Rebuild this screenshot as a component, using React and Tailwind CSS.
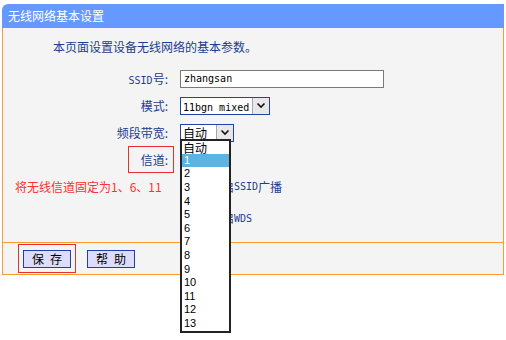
import React from 'react';

const Chevron = () => (
  <svg width="10" height="7" viewBox="0 0 10 7">
    <polyline points="1.5,1.5 5,5 8.5,1.5" fill="none" stroke="#111" strokeWidth="1.6" />
  </svg>
);

const Select = ({ width, children, menu }) => (
  <div className={`relative flex h-[18px] border border-[#2142a8] bg-white ${width}`}>
    <span className="flex-1 pl-[2px] leading-[16px] text-black whitespace-nowrap overflow-hidden">{children}</span>
    <span className="flex w-[17px] items-center justify-center border-l border-[#a6a6a6] bg-[#e8e8e8]">
      <Chevron />
    </span>
    {menu}
  </div>
);

const Row = ({ label, h = 'h-[27px]', children }) => (
  <div className={`flex items-center ${h}`}>
    <div className="w-[165px] flex justify-end text-[#1c3d91] whitespace-nowrap">{label}</div>
    <div className="ml-[12px] flex items-center">{children}</div>
  </div>
);

const mono = "font-['DejaVu_Sans_Mono',monospace] text-[10px]";

const App = () => {
  const channels = ['1', '2', '3', '4', '5', '6', '7', '8', '9', '10', '11', '12', '13'];

  const menu = (
    <div className="absolute left-[-1px] top-[14px] z-10 w-[51px] border-2 border-[#222] bg-white">
      <div className="h-[13.4px] leading-[13px] pl-[1px] text-black">自动</div>
      {channels.map((c) => (
        <div
          key={c}
          className={`h-[13.6px] leading-[13.6px] pl-[2px] font-['Liberation_Sans',sans-serif] text-[11px] ${
            c === '1' ? 'bg-[#5bb4e2] text-white' : 'text-black'
          }`}
        >
          {c}
        </div>
      ))}
    </div>
  );

  return (
    <div className="w-[506px] h-[340px] bg-white pt-[4px] px-[2px] font-['Noto_Sans_CJK_SC',sans-serif] text-[12px]">
      <div className="h-[24px] rounded-tl-[6px] bg-[#6699ff] pl-[6px] leading-[24px] text-white">
        无线网络基本设置
      </div>

      <div className="h-[214px] border-x border-[#ff9a33] bg-[#f4f4f4] pt-[10px]">
        <div className="pl-[50px] leading-[18px] text-[#1c3d91]">本页面设置设备无线网络的基本参数。</div>

        <div className="mt-[9px]">
          <Row label={<span><span className={mono}>SSID</span>号:</span>}>
            <div className={`h-[18px] w-[204px] border border-[#7a7a7a] bg-white pl-[3px] leading-[16px] text-black ${mono}`}>
              zhangsan
            </div>
          </Row>

          <Row label="模式:">
            <Select width="w-[90px]">
              <span className={mono}>11bgn mixed</span>
            </Select>
          </Row>

          <Row label="频段带宽:">
            <Select width="w-[54px]" menu={menu}>
              自动
            </Select>
          </Row>

          <Row label={
            <span className="relative">
              信道:
              <span className="absolute left-[-13px] right-[-6px] top-[-5px] bottom-[-4px] border border-[#e8312f]" />
            </span>
          }>
            <span />
          </Row>

          <div className="flex h-[27px] items-center">
            <div className="w-[165px] pl-[12px] whitespace-nowrap text-[#ff3030]">将无线信道固定为1、6、11</div>
            <div className="ml-[12px] flex items-center text-[#1c3d91]">
              <span className="ml-[2px] mr-[15px] h-[13px] w-[13px] border border-[#1c3d91] bg-white" />
              开启<span className={mono}>SSID</span>广播
            </div>
          </div>

          <div className="flex h-[36px] items-center">
            <div className="w-[165px]" />
            <div className="ml-[12px] flex items-center text-[#1c3d91]">
              <span className="ml-[2px] mr-[15px] h-[13px] w-[13px] border border-[#1c3d91] bg-white" />
              开启<span className={mono}>WDS</span>
            </div>
          </div>
        </div>
      </div>

      <div className="flex h-[33px] items-start border-y border-x border-[#ff9a33] bg-[#f4f4f4] pt-[1px]">
        <div className="ml-[15px] h-[29px] w-[58px] border border-[#e8312f] pt-[5px] pl-[4px]">
          <div className="flex h-[18px] w-[48px] items-center justify-center gap-[6px] border border-[#1e3fae] bg-[#dedcfb] text-black">
            <span>保</span><span>存</span>
          </div>
        </div>
        <div className="ml-[11px] mt-[6px] flex h-[18px] w-[48px] items-center justify-center gap-[6px] border border-[#1e3fae] bg-[#dedcfb] text-black">
          <span>帮</span><span>助</span>
        </div>
      </div>
    </div>
  );
};

export default App;
